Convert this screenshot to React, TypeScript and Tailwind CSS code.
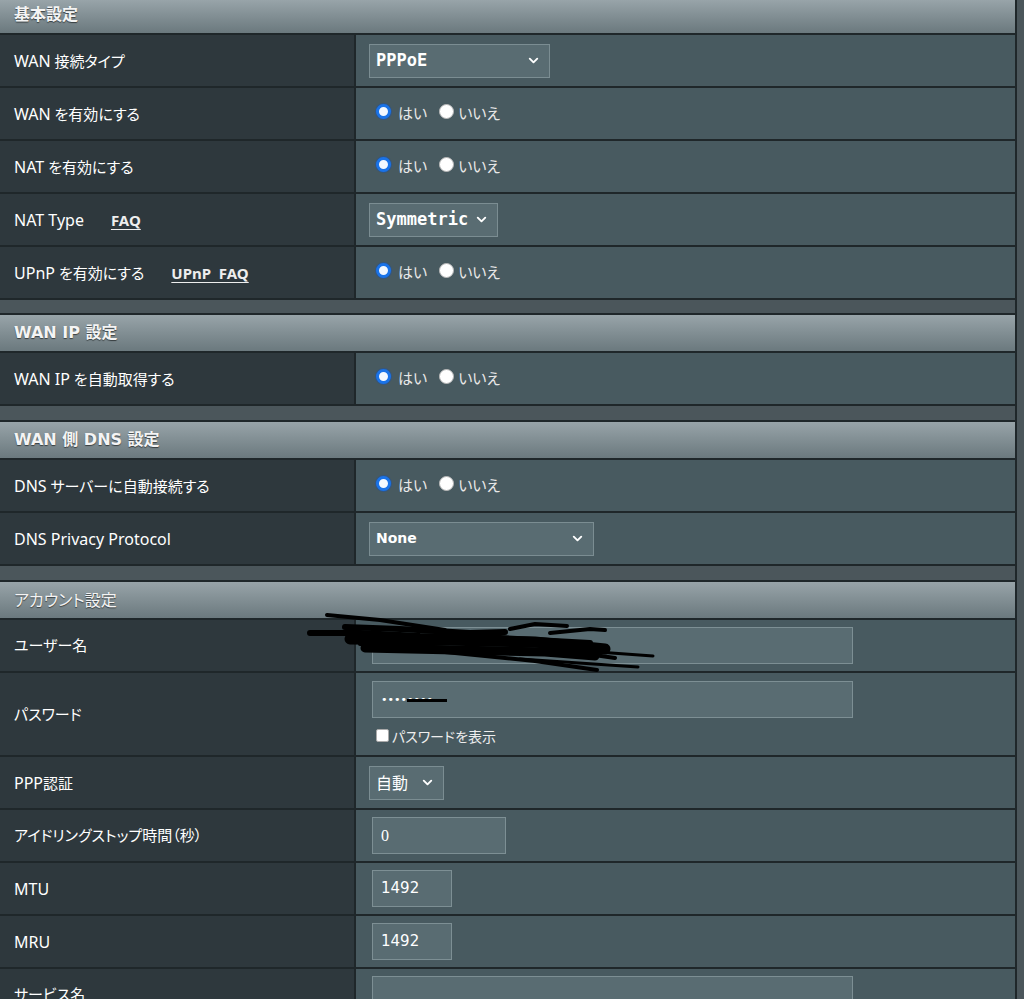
import { ChevronDown } from "lucide-react";
import type { ReactNode } from "react";

const line = "border-[#1f272a]";

function Header({ title, bold = true, first = false }: { title: string; bold?: boolean; first?: boolean }) {
  return (
    <div
      className={`flex items-center pl-[14px] border-b-2 ${line} bg-gradient-to-b from-[#98a4a9] to-[#6b797e] text-[#f4f4f4] [text-shadow:0_1px_1px_rgba(0,0,0,0.55)] ${
        first ? "h-[35px] pb-[4px]" : "h-[38px]"
      } ${
        bold
          ? "font-bold text-[16px] font-['DejaVu_Sans','Noto_Sans_CJK_JP',sans-serif]"
          : "font-normal text-[16px] [font-feature-settings:'palt']"
      }`}
    >
      {title}
    </div>
  );
}

// latin parts of the labels render a touch larger than the kana
function L({ children }: { children: ReactNode }) {
  return <span className="text-[16px]">{children}</span>;
}

function Row({ label, children, tall = false }: { label: ReactNode; children?: ReactNode; tall?: boolean }) {
  return (
    <div className={`relative flex border-b-2 ${line} ${tall ? "h-[84px]" : "h-[53px]"}`}>
      <div className={`w-[356px] shrink-0 flex items-center pl-[14px] bg-[#2e383d] border-r-2 ${line} text-[15px] text-white [font-feature-settings:'palt']`}>
        <span>{label}</span>
      </div>
      <div className="flex-1 flex items-center bg-[#485a60]">{children}</div>
    </div>
  );
}

function Radio({ checked }: { checked: boolean }) {
  return checked ? (
    <span className="w-[15px] h-[15px] mb-[5px] rounded-full border-[3px] border-[#1a73e8] bg-[#f3f8ff] shadow-[0_0_0_1px_rgba(20,80,180,0.4)]" />
  ) : (
    <span className="w-[15px] h-[15px] mb-[5px] rounded-full bg-white border border-[#b8b8b8]" />
  );
}

function YesNo() {
  return (
    <div className="flex items-center pl-[20px] text-[15px] text-[#e8e8e8] [font-feature-settings:'palt']">
      <Radio checked />
      <span className="ml-[7px]">はい</span>
      <span className="ml-[12px]" />
      <Radio checked={false} />
      <span className="ml-[4px]">いいえ</span>
    </div>
  );
}

function Select({ text, w, mono = false, cls = "" }: { text: string; w: string; mono?: boolean; cls?: string }) {
  return (
    <div className={`ml-[13px] h-[34px] ${w} flex items-center justify-between pl-[6px] pr-[8px] bg-[#596c72] border border-[#7b8d92] text-white`}>
      <span
        className={
          mono
            ? "font-['DejaVu_Sans_Mono',monospace] font-bold text-[17px]"
            : cls
        }
      >
        {text}
      </span>
      <ChevronDown size={15} strokeWidth={3} className="text-white" />
    </div>
  );
}

function Input({ w, children }: { w: string; children?: ReactNode }) {
  return (
    <div className={`ml-[16px] h-[37px] ${w} flex items-center pl-[8px] bg-[#596c72] border border-[#7d8f94] text-white`}>
      {children}
    </div>
  );
}

function Link({ text, ml }: { text: string; ml: string }) {
  return (
    <span className={`${ml} font-bold underline underline-offset-[3px] text-[15px] text-[#eeeeee] whitespace-pre`}>
      {text}
    </span>
  );
}

export default function App() {
  return (
    <div className="min-h-screen bg-[#4b565b] font-['Noto_Sans','Noto_Sans_CJK_JP',sans-serif]">
      <div className={`w-[1017px] border-r-2 ${line}`}>
        <section>
          <Header title="基本設定" first />
          <Row label={<><L>WAN</L> 接続タイプ</>}>
            <Select text="PPPoE" w="w-[181px]" mono />
          </Row>
          <Row label={<><L>WAN</L> を有効にする</>}>
            <YesNo />
          </Row>
          <Row label={<><L>NAT</L> を有効にする</>}>
            <YesNo />
          </Row>
          <Row
            label={
              <>
                <L>NAT Type</L>
                <Link text="FAQ" ml="ml-[27px]" />
              </>
            }
          >
            <Select text="Symmetric" w="w-[129px]" mono />
          </Row>
          <Row
            label={
              <>
                <L>UPnP</L> を有効にする
                <Link text="UPnP  FAQ" ml="ml-[27px]" />
              </>
            }
          >
            <YesNo />
          </Row>
        </section>

        <section className={`mt-[13px] border-t-2 ${line}`}>
          <Header title="WAN IP 設定" />
          <Row label={<><L>WAN IP</L> を自動取得する</>}>
            <YesNo />
          </Row>
        </section>

        <section className={`mt-[14px] border-t-2 ${line}`}>
          <Header title="WAN 側 DNS 設定" />
          <Row label={<><L>DNS</L> サーバーに自動接続する</>}>
            <YesNo />
          </Row>
          <Row label={<L>DNS Privacy Protocol</L>}>
            <Select text="None" w="w-[225px]" cls="font-['DejaVu_Sans',sans-serif] font-bold text-[14px]" />
          </Row>
        </section>

        <section className={`mt-[14px] border-t-2 ${line}`}>
          <Header title="アカウント設定" bold={false} />
          <Row label="ユーザー名">
            <Input w="w-[481px]" />
            {/* redaction scribble drawn over the user name */}
            <svg
              className="absolute left-[305px] top-[-8px] pointer-events-none"
              width="360"
              height="66"
              viewBox="0 0 360 66"
              fill="none"
              stroke="#000"
              strokeLinecap="round"
              strokeLinejoin="round"
            >
              <polyline points="22,3 75,8 140,18" strokeWidth="4" />
              <polyline points="5,21 55,21 115,24 195,26 285,31" strokeWidth="6" />
              <polyline points="40,15 95,17 165,21 200,20" strokeWidth="6" />
              <polyline points="45,27 140,28 230,30 300,37" strokeWidth="11" />
              <polyline points="60,36 150,38 240,40 290,44" strokeWidth="9" />
              <polyline points="55,32 145,36 255,38 310,46" strokeWidth="4" />
              <polyline points="140,40 230,49 292,58" strokeWidth="4" />
              <polyline points="205,17 230,12 262,14" strokeWidth="4" />
              <polyline points="245,21 285,17 300,18" strokeWidth="4" />
              <polyline points="265,38 348,44" strokeWidth="3" />
              <polyline points="215,47 333,55" strokeWidth="3" />
            </svg>
          </Row>
          <Row label="パスワード" tall>
            <div className="flex flex-col self-start pt-[8px]">
              <Input w="w-[481px]">
                <span className="relative font-['DejaVu_Sans',sans-serif] text-[11px] tracking-[0px] text-white leading-none">
                  ••••••••
                  <span className="absolute left-[26px] top-[5px] w-[40px] h-[3px] bg-black" />
                </span>
              </Input>
              <div className="flex items-center ml-[20px] mt-[8px] text-[14px] text-[#eeeeee] [font-feature-settings:'palt']">
                <span className="w-[13px] h-[13px] mb-[3px] bg-white rounded-[2px] border border-[#aaaaaa]" />
                <span className="ml-[3px]">パスワードを表示</span>
              </div>
            </div>
          </Row>
          <Row label={<><L>PPP</L>認証</>}>
            <Select text="自動" w="w-[75px]" cls="text-[16px]" />
          </Row>
          <Row label="アイドリングストップ時間（秒）">
            <Input w="w-[134px]">
              <span className="font-['Liberation_Serif',serif] text-[16px]">0</span>
            </Input>
          </Row>
          <Row label={<L>MTU</L>}>
            <Input w="w-[80px]">
              <span className="font-['DejaVu_Sans',sans-serif] text-[15px]">1492</span>
            </Input>
          </Row>
          <Row label={<L>MRU</L>}>
            <Input w="w-[80px]">
              <span className="font-['DejaVu_Sans',sans-serif] text-[15px]">1492</span>
            </Input>
          </Row>
          <Row label="サービス名">
            <Input w="w-[481px]" />
          </Row>
        </section>
      </div>
    </div>
  );
}
